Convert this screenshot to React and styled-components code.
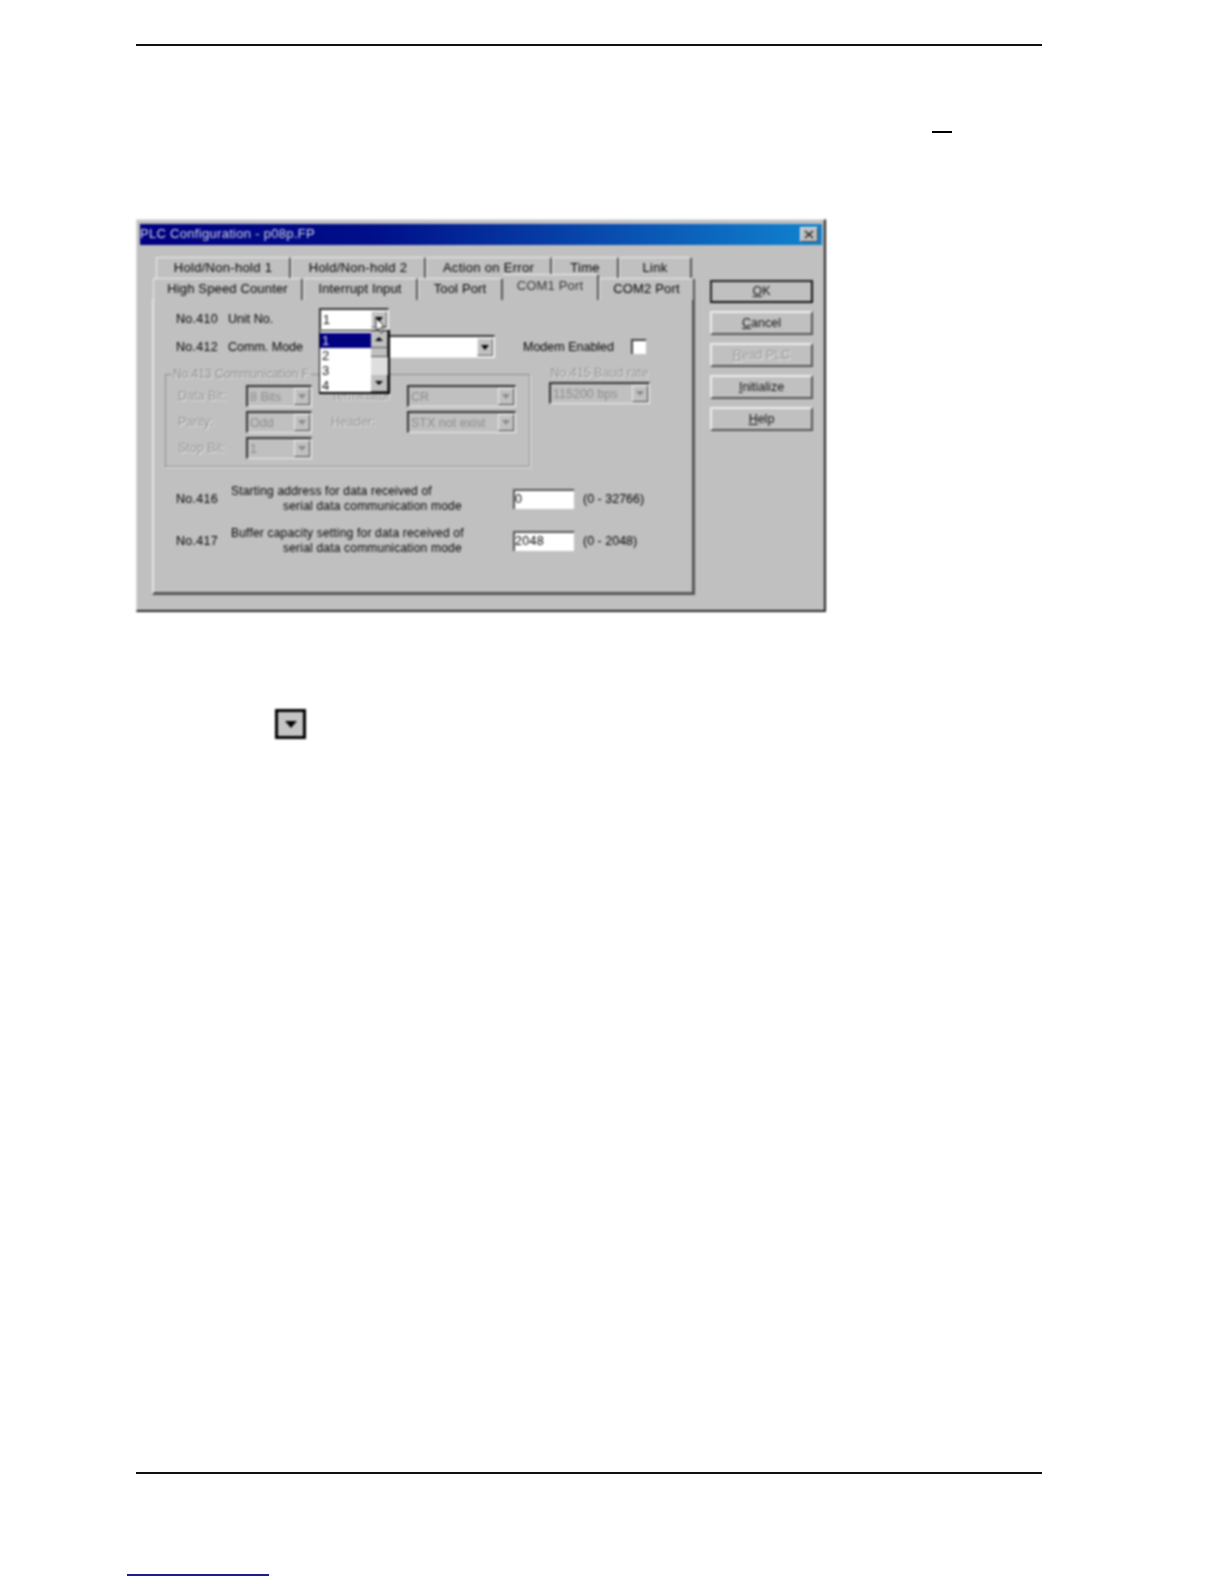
import React from 'react';
import styled, { createGlobalStyle, css } from 'styled-components';

const Global = createGlobalStyle`
    html, body { margin: 0; padding: 0; background: #fff; }
    body { font-family: "Liberation Sans", Arial, sans-serif; }
`;

const Page = styled.div`
    width: 1224px;
    height: 1584px;
    padding-left: 136px;
    box-sizing: border-box;
    overflow: hidden;
    background: #fff;
`;

const Rule = styled.div`
    width: 906px;
    height: 2px;
    background: #111;
    margin-top: ${p => p.$top}px;
`;

const Dash = styled.div`
    width: 20px;
    height: 2px;
    background: #000;
    margin: 85px 0 0 796px;
`;

const LinkLine = styled.div`
    width: 142px;
    height: 2px;
    background: #1c1c8c;
    margin: 100px 0 0 -9px;
`;

const Dialog = styled.div`
    width: 690px;
    height: 393px;
    margin-top: 86px;
    box-sizing: border-box;
    padding: 4px 2px 0 3px;
    background: #c0c0c0;
    border-top: 1px solid #e8e8e8;
    border-left: 1px solid #d8d8d8;
    border-right: 2px solid #222;
    border-bottom: 2px solid #222;
    font-size: 12.5px;
    color: #000;
    filter: blur(0.85px);
`;

const TitleBar = styled.div`
    height: 21px;
    box-sizing: border-box;
    padding: 0 4px 2px 0;
    display: flex;
    align-items: center;
    justify-content: space-between;
    background: linear-gradient(90deg, #000080 0%, #00108a 35%, #1084d0 100%);
    color: #d8d8e8;
    font-size: 13px;
    letter-spacing: 0.3px;
`;

const CloseBox = styled.div`
    width: 18px;
    height: 15px;
    margin-top: 2px;
    display: flex;
    align-items: center;
    justify-content: center;
    background: #c0c0c0;
    border-top: 1px solid #eee;
    border-left: 1px solid #eee;
    border-right: 1px solid #444;
    border-bottom: 1px solid #444;
    box-sizing: border-box;
`;

const Body = styled.div`
    display: flex;
    padding: 12px 0 0 12px;
`;

const TabColumn = styled.div`
    width: 543px;
    flex: none;
`;

const TabRow = styled.div`
    display: grid;
    grid-template-columns: ${p => p.$cols};
    height: 21px;
    margin-left: ${p => p.$left}px;
    position: relative;
    z-index: 1;
    letter-spacing: ${p => p.$spacing}px;
`;

const Tab = styled.div`
    display: flex;
    align-items: center;
    justify-content: center;
    box-sizing: border-box;
    padding-bottom: 2px;
    background: #c0c0c0;
    border-top: 1px solid #eee;
    border-left: 1px solid #eee;
    border-right: 2px solid #555;
    border-radius: 2px 2px 0 0;
    font-size: 13px;
    white-space: nowrap;
    ${p => p.$selected && css`
        height: 26px;
        margin-top: -4px;
        padding-bottom: 4px;
        border-left: 0;
        position: relative;
        z-index: 2;
        color: #333;
    `}
`;

const Panel = styled.div`
    height: 296px;
    box-sizing: border-box;
    padding: 8px 0 0 11px;
    background: #c0c0c0;
    border-top: 1px solid #eee;
    border-left: 2px solid #e4e4e4;
    border-right: 3px solid #555;
    border-bottom: 3px solid #555;
`;

const Row = styled.div`
    display: flex;
    align-items: center;
    padding-left: 11px;
    margin-top: ${p => p.$top || 0}px;
    height: ${p => p.$h}px;
`;

const NoLabel = styled.span`
    width: ${p => p.$w || 52}px;
    flex: none;
    letter-spacing: 0.3px;
`;

const FieldLabel = styled.span`
    width: 91px;
    flex: none;
`;

const Combo = styled.div`
    position: relative;
    display: flex;
    align-items: center;
    justify-content: space-between;
    flex: none;
    box-sizing: border-box;
    width: ${p => p.$w}px;
    height: ${p => p.$h || 22}px;
    padding: 1px 1px 1px 2px;
    background: ${p => (p.$off ? '#c0c0c0' : '#fff')};
    color: ${p => (p.$off ? '#8c8c8c' : '#111')};
    border-top: 2px solid #333;
    border-left: 2px solid #333;
    border-right: 1px solid #eee;
    border-bottom: 1px solid #eee;
    font-size: 12.5px;
    white-space: nowrap;
`;

const Arrow = styled.span`
    width: 16px;
    align-self: stretch;
    flex: none;
    display: flex;
    align-items: center;
    justify-content: center;
    background: #c0c0c0;
    border-top: 1px solid #eee;
    border-left: 1px solid #eee;
    border-right: 1px solid #555;
    border-bottom: 1px solid #555;
    box-sizing: border-box;
    &::after {
        content: "";
        border-left: 4px solid transparent;
        border-right: 4px solid transparent;
        border-top: 5px solid ${p => (p.$off ? '#8a8a8a' : '#000')};
    }
`;

const DropList = styled.div`
    position: absolute;
    left: -2px;
    top: 20px;
    z-index: 5;
    width: 71px;
    height: 64px;
    box-sizing: border-box;
    display: flex;
    background: #fff;
    border: 1px solid #000;
    border-width: 1px 2px 2px 1px;
`;

const ListItems = styled.div`
    flex: 1;
    padding-top: 2px;
`;

const ListItem = styled.div`
    height: 15px;
    line-height: 15px;
    padding: 0 2px;
    font-size: 13px;
    width: ${p => (p.$active ? 'auto' : 'fit-content')};
    background: ${p => (p.$active ? '#000080' : 'transparent')};
    color: ${p => (p.$active ? '#dde' : '#111')};
`;

const ScrollBar = styled.div`
    width: 17px;
    display: flex;
    flex-direction: column;
    background: #dedede;
`;

const ScrollBtn = styled.div`
    height: ${p => p.$h}px;
    display: flex;
    align-items: center;
    justify-content: center;
    background: #c0c0c0;
    box-sizing: border-box;
    border-right: 1px solid #555;
    border-bottom: 1px solid #555;
    &::after {
        content: "";
        border-left: 4px solid transparent;
        border-right: 4px solid transparent;
        ${p => p.$dir === 'up' && 'border-bottom: 4px solid #000;'}
        ${p => p.$dir === 'down' && 'border-top: 4px solid #000;'}
    }
`;

const ScrollGap = styled.div`
    flex: 1;
`;

const Pointer = styled.svg`
    position: absolute;
    left: 54px;
    top: 7px;
    z-index: 6;
`;

const Modem = styled.span`
    margin-left: 28px;
    width: 108px;
    flex: none;
`;

const CheckBox = styled.span`
    width: 15px;
    height: 15px;
    box-sizing: border-box;
    background: #fff;
    border-top: 2px solid #444;
    border-left: 2px solid #444;
`;

const Middle = styled.div`
    display: flex;
    margin-top: 8px;
`;

const Group = styled.div`
    position: relative;
    width: 365px;
    height: 93px;
    margin-top: 8px;
    padding: 10px 0 0 12px;
    box-sizing: border-box;
    border: 1px solid #8c8c8c;
    box-shadow: 1px 1px 0 #e8e8e8;
    display: grid;
    grid-template-columns: 68px 66px 95px 109px;
    grid-auto-rows: 22px;
    row-gap: 4px;
`;

const Legend = styled.span`
    position: absolute;
    left: 5px;
    top: -8px;
    white-space: nowrap;
    padding: 0 2px;
    background: #c0c0c0;
    color: #8c8c8c;
    font-size: 12px;
    text-shadow: 1px 1px 0 #e8e8e8;
`;

const OffLabel = styled.span`
    align-self: center;
    color: #8f8f8f;
    text-shadow: 1px 1px 0 #ececec;
    padding-left: ${p => p.$pad || 0}px;
    white-space: nowrap;
`;

const Baud = styled.div`
    margin-left: 19px;
    display: flex;
    flex-direction: column;
    gap: 2px;
`;

const AddressRow = styled.div`
    display: flex;
    align-items: center;
    height: 30px;
    padding-left: 11px;
    margin-top: ${p => p.$top}px;
`;

const Description = styled.div`
    width: 282px;
    flex: none;
    line-height: 15px;
    font-size: 12px;
    letter-spacing: 0.2px;
    div + div { padding-left: 52px; }
`;

const NumberBox = styled.div`
    width: 61px;
    height: 20px;
    flex: none;
    box-sizing: border-box;
    line-height: 17px;
    letter-spacing: 0.3px;
    background: #fff;
    border-top: 2px solid #555;
    border-left: 2px solid #555;
`;

const RangeText = styled.span`
    margin-left: 9px;
`;

const Actions = styled.div`
    width: 103px;
    margin: 23px 0 0 15px;
    display: flex;
    flex-direction: column;
    gap: 8px;
`;

const ActionButton = styled.div`
    height: ${p => (p.$primary ? 23 : 24)}px;
    padding-bottom: 1px;
    display: flex;
    align-items: center;
    justify-content: center;
    box-sizing: border-box;
    background: #c0c0c0;
    color: ${p => (p.$off ? '#949494' : '#111')};
    text-shadow: ${p => (p.$off ? '1px 1px 0 #eee' : 'none')};
    border-top: 2px solid ${p => (p.$primary ? '#222' : '#eee')};
    border-left: 2px solid ${p => (p.$primary ? '#222' : '#eee')};
    border-right: 2px solid ${p => (p.$primary ? '#111' : '#555')};
    border-bottom: 2px solid ${p => (p.$primary ? '#111' : '#555')};
`;

const DropButton = styled.div`
    width: 31px;
    height: 30px;
    margin: 97px 0 0 139px;
    box-sizing: border-box;
    display: flex;
    align-items: center;
    justify-content: center;
    background: #c4c4c4;
    border: 3px solid #000;
    filter: blur(0.85px);
    &::after {
        content: "";
        border-left: 6px solid transparent;
        border-right: 6px solid transparent;
        border-top: 7px solid #000;
    }
`;

const App = () => {
    return (
        <Page>
            <Global />
            <Rule $top={44} />
            <Dash />
            <Dialog>
                <TitleBar>
                    <span>PLC Configuration - p08p.FP</span>
                    <CloseBox>
                        <svg width="10" height="9" viewBox="0 0 10 9">
                            <path d="M1 1l8 7M9 1L1 8" stroke="#222" strokeWidth="1.6" />
                        </svg>
                    </CloseBox>
                </TitleBar>
                <Body>
                    <TabColumn>
                        <TabRow $left={4} $spacing={0.3} $cols="135px 135px 126px 67px 73px">
                            <Tab>Hold/Non-hold 1</Tab>
                            <Tab>Hold/Non-hold 2</Tab>
                            <Tab>Action on Error</Tab>
                            <Tab>Time</Tab>
                            <Tab>Link</Tab>
                        </TabRow>
                        <TabRow $left={1} $spacing={0.15} $cols="150px 115px 85px 96px 96px">
                            <Tab>High Speed Counter</Tab>
                            <Tab>Interrupt Input</Tab>
                            <Tab>Tool Port</Tab>
                            <Tab $selected>COM1 Port</Tab>
                            <Tab>COM2 Port</Tab>
                        </TabRow>
                        <Panel>
                            <Row $h={22}>
                                <NoLabel>No.410</NoLabel>
                                <FieldLabel>Unit No.</FieldLabel>
                                <Combo $w={70}>
                                    <span>1</span>
                                    <Arrow />
                                    <Pointer width="12" height="17" viewBox="0 0 12 17">
                                        <path d="M1 1v13l3-3 2 5 2-1-2-5h4z" fill="#fff" stroke="#222" />
                                    </Pointer>
                                    <DropList>
                                        <ListItems>
                                            <ListItem $active>1</ListItem>
                                            <ListItem>2</ListItem>
                                            <ListItem>3</ListItem>
                                            <ListItem>4</ListItem>
                                        </ListItems>
                                        <ScrollBar>
                                            <ScrollBtn $h={17} $dir="up" />
                                            <ScrollBtn $h={9} />
                                            <ScrollGap />
                                            <ScrollBtn $h={17} $dir="down" />
                                        </ScrollBar>
                                    </DropList>
                                </Combo>
                            </Row>
                            <Row $h={23} $top={5}>
                                <NoLabel>No.412</NoLabel>
                                <FieldLabel>Comm. Mode</FieldLabel>
                                <Combo $w={176} $h={23}>
                                    <span />
                                    <Arrow />
                                </Combo>
                                <Modem>Modem Enabled</Modem>
                                <CheckBox />
                            </Row>
                            <Middle>
                                <Group>
                                    <Legend>No.413 Communication F</Legend>
                                    <OffLabel>Data Bit:</OffLabel>
                                    <Combo $off $w={66}><span>8 Bits</span><Arrow $off /></Combo>
                                    <OffLabel $pad={19}>Terminator</OffLabel>
                                    <Combo $off $w={109}><span>CR</span><Arrow $off /></Combo>
                                    <OffLabel>Parity:</OffLabel>
                                    <Combo $off $w={66}><span>Odd</span><Arrow $off /></Combo>
                                    <OffLabel $pad={19}>Header:</OffLabel>
                                    <Combo $off $w={109}><span>STX not exist</span><Arrow $off /></Combo>
                                    <OffLabel>Stop Bit:</OffLabel>
                                    <Combo $off $w={66}><span>1</span><Arrow $off /></Combo>
                                </Group>
                                <Baud>
                                    <OffLabel>No.415 Baud rate</OffLabel>
                                    <Combo $off $w={101}><span>115200 bps</span><Arrow $off /></Combo>
                                </Baud>
                            </Middle>
                            <AddressRow $top={17}>
                                <NoLabel $w={55}>No.416</NoLabel>
                                <Description>
                                    <div>Starting address for data received of</div>
                                    <div>serial data communication mode</div>
                                </Description>
                                <NumberBox>0</NumberBox>
                                <RangeText>(0 - 32766)</RangeText>
                            </AddressRow>
                            <AddressRow $top={12}>
                                <NoLabel $w={55}>No.417</NoLabel>
                                <Description>
                                    <div>Buffer capacity setting for data received of</div>
                                    <div>serial data communication mode</div>
                                </Description>
                                <NumberBox>2048</NumberBox>
                                <RangeText>(0 - 2048)</RangeText>
                            </AddressRow>
                        </Panel>
                    </TabColumn>
                    <Actions>
                        <ActionButton $primary><span><u>O</u>K</span></ActionButton>
                        <ActionButton><span><u>C</u>ancel</span></ActionButton>
                        <ActionButton $off><span><u>R</u>ead PLC</span></ActionButton>
                        <ActionButton><span><u>I</u>nitialize</span></ActionButton>
                        <ActionButton><span><u>H</u>elp</span></ActionButton>
                    </Actions>
                </Body>
            </Dialog>
            <DropButton />
            <Rule $top={733} />
            <LinkLine />
        </Page>
    );
};

export default App;
